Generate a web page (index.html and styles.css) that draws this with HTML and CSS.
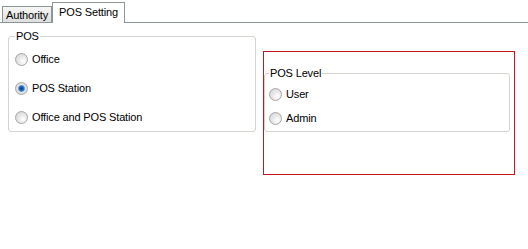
FILE: index.html
```html
<!DOCTYPE html>
<html>
<head>
    <title>POS Setting</title>
    <link rel="stylesheet" href="styles.css">
</head>
<body>
    <div class="tabs">
        <div class="tab">Authority</div>
        <div class="tab active">POS Setting</div>
    </div>

    <div class="tab-page">
        <fieldset class="group pos-group">
            <legend>POS</legend>
            <label class="radio-row"><input type="radio" name="pos"> Office</label>
            <label class="radio-row"><input type="radio" name="pos" checked> POS Station</label>
            <label class="radio-row"><input type="radio" name="pos"> Office and POS Station</label>
        </fieldset>

        <div class="level-box">
            <fieldset class="group level-group">
                <legend>POS Level</legend>
                <label class="radio-row"><input type="radio" name="level"> User</label>
                <label class="radio-row"><input type="radio" name="level"> Admin</label>
            </fieldset>
        </div>
    </div>
</body>
</html>
```

FILE: styles.css
```css
body {
    margin: 0;
    font-family: "Liberation Sans", Arial, sans-serif;
    font-size: 11px;
    letter-spacing: -0.15px;
    color: #000000;
    background-color: #ffffff;
}
.tabs {
    display: flex;
    align-items: flex-end;
    height: 22px;
    padding-left: 2px;
    border-bottom: 1px solid #8e9597;
}
.tab {
    height: 15px;
    line-height: 17px;
    padding: 0 3px;
    border: 1px solid #8e9597;
    border-bottom: none;
    background: linear-gradient(#f6f6f6, #dedede);
}
.tab.active {
    height: 20px;
    line-height: 18px;
    padding: 0 6px;
    margin-bottom: -1px;
    background: #ffffff;
}
.tab-page {
    display: flex;
    align-items: flex-start;
    gap: 7px;
    padding: 7px 0 0 8px;
}
.group {
    margin: 0;
    border: 1px solid #d4d4ce;
    border-radius: 3px;
}
.group legend {
    padding: 0 1px;
    line-height: 13px;
}
.pos-group {
    width: 248px;
    box-sizing: border-box;
    padding: 9px 6px 7px 6px;
    display: flex;
    flex-direction: column;
    gap: 15px;
}
.level-box {
    margin-top: 21px;
    width: 252px;
    height: 124px;
    box-sizing: border-box;
    border: 1px solid #c8161d;
    padding: 15px 4px 0 0;
}
.level-group {
    width: 246px;
    box-sizing: border-box;
    padding: 7px 4px 6px 4px;
    display: flex;
    flex-direction: column;
    gap: 10px;
}
.radio-row {
    display: flex;
    align-items: center;
    gap: 4px;
    height: 14px;
}
.radio-row input {
    appearance: none;
    margin: 0;
    width: 13px;
    height: 13px;
    border-radius: 50%;
    border: 1px solid #a6a6a6;
    box-sizing: border-box;
    background: radial-gradient(circle at 65% 65%, #ffffff 0%, #e8e8e8 45%, #cfcfcf 100%);
}
.radio-row input:checked {
    background: radial-gradient(circle at 50% 50%, #083f86 0%, #1f6cc4 28%, #5f9ad8 38%, #e4e4e4 50%, #cfcfcf 100%);
}
```
